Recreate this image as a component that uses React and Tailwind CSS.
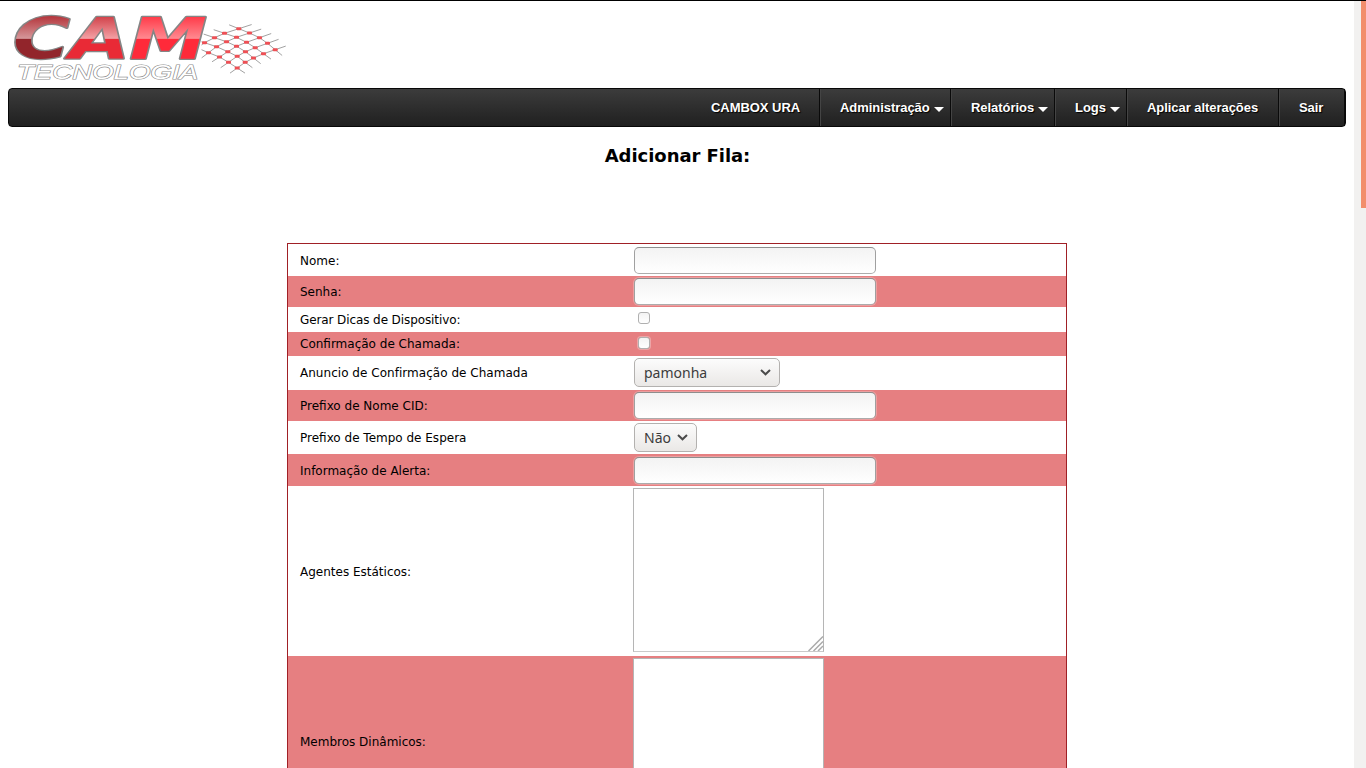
import React from "react";

const nodes = [
  [[99.3, 27.7], [110, 32], [120, 36.7], [128, 42.3], [135.7, 48.7]],
  [[85, 32.3], [97, 36.3], [107, 41.3], [115.7, 46.7], [124, 52.7]],
  [[75, 36.7], [87, 40.7], [97, 45.3], [106, 50.7], [114, 57]],
  [[65, 41.7], [77, 45.7], [88.3, 50.7], [97.7, 55.3], [105.7, 61.3]],
  [[58, 47], [69, 51.7], [80, 56], [89, 61.3], [97.7, 67]],
];

// Continues a line a little past its last point.
const extend = (from, to) => [to[0] + (to[0] - from[0]) * 0.9, to[1] + (to[1] - from[1]) * 0.9];
const meshLines = [...nodes, ...nodes[0].map((_, i) => nodes.map((row) => row[i]))].map((line) =>
  [extend(line[1], line[0]), ...line, extend(line[3], line[4])].map((p) => p.join(",")).join(" ")
);

function LetterGradient({ id, top, middle, bottom }) {
  return (
    <linearGradient id={id} gradientUnits="userSpaceOnUse" x1="0" y1="-44" x2="0" y2="0">
      <stop offset="0" stopColor={top} />
      <stop offset="0.52" stopColor={middle} />
      <stop offset="0.53" stopColor={bottom} />
      <stop offset="1" stopColor={bottom} />
    </linearGradient>
  );
}

function Logo() {
  return (
    <svg width="290" height="86" viewBox="0 0 290 86" className="block">
      <defs>
        <LetterGradient id="dark" top="#b5383e" middle="#d5979a" bottom="#92252b" />
        <LetterGradient id="mid" top="#d2434b" middle="#f3a0a4" bottom="#e92a36" />
        <LetterGradient id="bright" top="#ff3b49" middle="#ff8990" bottom="#ff2a3a" />
        <clipPath id="meshArea">
          <rect x="62" y="20" width="90" height="60" />
        </clipPath>
      </defs>
      <g transform="translate(139.5 0)" clipPath="url(#meshArea)">
        {meshLines.map((points, i) => (
          <polyline key={i} points={points} fill="none" stroke="#6d6d6d" strokeWidth="0.65" />
        ))}
        {nodes.flat().map(([x, y], i) => (
          <rect key={i} x={x - 2.5} y={y - 1.5} width="5" height="3" rx="1" fill="#ee5055" />
        ))}
      </g>
      <text
        transform="translate(13 57.5) scale(1 0.95)"
        textLength="194"
        lengthAdjust="spacingAndGlyphs"
        stroke="#858585"
        strokeWidth="2.6"
        paintOrder="stroke"
        strokeLinejoin="round"
        fontFamily="DejaVu Sans"
        fontWeight="bold"
        fontStyle="italic"
        fontSize="59"
      >
        <tspan fill="url(#dark)">C</tspan>
        <tspan fill="url(#mid)">A</tspan>
        <tspan fill="url(#bright)">M</tspan>
      </text>
      <text
        x="17"
        y="77.5"
        textLength="181"
        lengthAdjust="spacingAndGlyphs"
        fontFamily="Liberation Sans"
        fontStyle="italic"
        fontSize="21"
        fill="#fff"
        stroke="#8c8c8c"
        strokeWidth="1.2"
        paintOrder="stroke"
      >
        TECNOLOGIA
      </text>
    </svg>
  );
}

function MenuItem({ children, width, arrow, first }) {
  return (
    <div
      className={`flex h-full items-center border-r border-r-[#0a0a0a] ${first ? "pl-5" : "border-l border-l-[#444] pl-[19px]"} ${width}`}
    >
      {children}
      {arrow && (
        <svg width="10" height="5" viewBox="0 0 10 5" className="ml-1 mt-[3px] shrink-0">
          <path d="M0 0H10L5 5Z" fill="#fff" />
        </svg>
      )}
    </div>
  );
}

function TextInput() {
  return (
    <div className="ml-px h-[27px] w-[242px] rounded-[5px] border border-t-[#8e8e8e] border-x-[#a0a0a0] border-b-[#acacac] bg-linear-to-b from-[#f3f3f3] to-white shadow-[0_0_0_1px_rgba(255,255,255,0.25)]" />
  );
}

function Checkbox() {
  return (
    <div className="ml-[5px] size-3 rounded-[3px] border border-[#b0b0b0] bg-linear-to-b from-[#f3f3f3] to-white shadow-[0_0_0_1px_rgba(255,255,255,0.3)]" />
  );
}

function Select({ label, width }) {
  return (
    <div
      className={`ml-px flex h-[29px] items-center justify-between rounded-[5px] border border-[#b3b1af] bg-linear-to-b from-[#fcfcfc] to-[#eae8e6] pl-[9px] pr-2 font-['Noto_Sans',sans-serif] text-[14px] text-[#3c3c3c] ${width}`}
    >
      {label}
      <svg width="11" height="7" viewBox="0 0 11 7">
        <path d="M1 1L5.5 5.3L10 1" fill="none" stroke="#4a4a4a" strokeWidth="2" />
      </svg>
    </div>
  );
}

function TextArea() {
  return (
    <div className="flex h-[164px] w-[191px] items-end justify-end border border-t-[#b5b5b5] border-x-[#b5b5b5] border-b-[#cacaca] bg-white">
      <svg width="15" height="15" viewBox="0 0 15 15">
        <path d="M0.5 15L15 0.5M5.5 15L15 5.5M10 15L15 10" stroke="#aaa" strokeWidth="1.5" />
      </svg>
    </div>
  );
}

const rows = [
  ["Nome:", "h-8 pt-[3px]", <TextInput />, "-mt-px"],
  ["Senha:", "h-[31px] pt-[2px]", <TextInput />, "-mt-px"],
  ["Gerar Dicas de Dispositivo:", "h-[25px] pt-[5px]", <Checkbox />, "-mt-[5px] tracking-[-0.1px]"],
  ["Confirmação de Chamada:", "h-6 pt-[5px]", <Checkbox />, "-mt-[5px]"],
  ["Anuncio de Confirmação de Chamada", "h-[34px] pt-[2px]", <Select label="pamonha" width="w-[146px]" />, "-mt-[3px] tracking-[0.03px]"],
  ["Prefixo de Nome CID:", "h-[31px] pt-[2px]", <TextInput />, "-mt-px"],
  ["Prefixo de Tempo de Espera", "h-[33px] pt-[2px]", <Select label="Não" width="w-[63px]" />, "-mt-px"],
  ["Informação de Alerta:", "h-8 pt-[3px]", <TextInput />, "-mt-px"],
  ["Agentes Estáticos:", "h-[170px] pt-[2px]", <TextArea />, "-mt-px"],
  ["Membros Dinâmicos:", "h-[170px] pt-[2px]", <TextArea />, "-mt-px"],
];

export default function App() {
  return (
    <div className="flex h-screen w-full overflow-hidden border-t border-black bg-white font-['DejaVu_Sans',sans-serif] text-black">
      <main className="w-[1354px] shrink-0 overflow-hidden">
        <header className="h-[87px] overflow-hidden">
          <Logo />
        </header>
        <nav className="ml-2 flex h-[39px] w-[1338px] justify-end rounded-[4px] border border-[#080808] bg-linear-to-b from-[#3c3c3c] to-[#202020] font-['Liberation_Sans',sans-serif] text-[13px] font-bold tracking-[-0.05px] text-white [text-shadow:1px_1px_1px_#000]">
          <MenuItem width="w-[129px]" first>CAMBOX URA</MenuItem>
          <MenuItem width="w-[131px]" arrow>Administração</MenuItem>
          <MenuItem width="w-[104px]" arrow>Relatórios</MenuItem>
          <MenuItem width="w-[72px]" arrow>Logs</MenuItem>
          <MenuItem width="w-[152px]">Aplicar alterações</MenuItem>
          <MenuItem width="w-[66px]">Sair</MenuItem>
        </nav>
        <h1 className="mt-4 pl-px text-center text-[18px] font-bold leading-[26px] tracking-[-0.05px]">Adicionar Fila:</h1>
        <section className="ml-[287px] mt-[74px] w-[780px] border border-[#a02026]">
          {rows.map(([label, rowClass, control, labelClass], i) => (
            <div key={label} className={`flex items-start ${i % 2 ? "bg-[#e67f81]" : "bg-white"} ${rowClass}`}>
              <div className={`w-[345px] shrink-0 self-center pl-3 text-[12px] leading-4 ${labelClass}`}>{label}</div>
              {control}
            </div>
          ))}
        </section>
      </main>
      <aside className="flex w-3 shrink-0 justify-end bg-[#f2f1f0]">
        <div className="h-[207px] w-[5px] bg-[#f28e6c]" />
      </aside>
    </div>
  );
}
